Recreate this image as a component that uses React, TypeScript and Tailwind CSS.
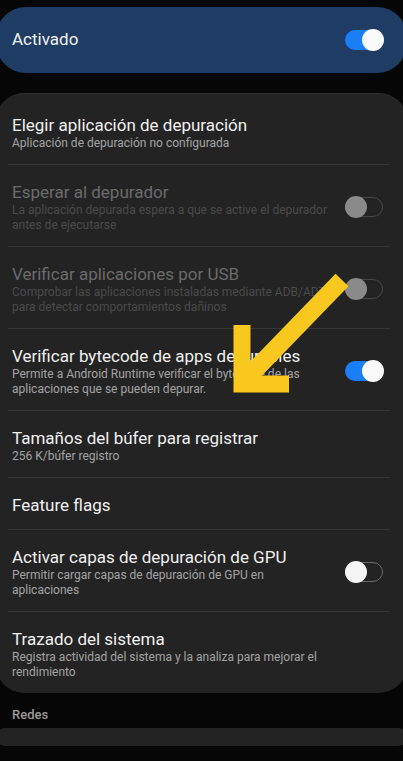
import React from "react";

type Row = {
  title: string;
  sub?: string[];
  toggle?: "on" | "off" | "disabled";
  disabled?: boolean;
};

const rows: Row[] = [
  { title: "Elegir aplicación de depuración", sub: ["Aplicación de depuración no configurada"] },
  {
    title: "Esperar al depurador",
    sub: ["La aplicación depurada espera a que se active el depurador", "antes de ejecutarse"],
    toggle: "disabled",
    disabled: true,
  },
  {
    title: "Verificar aplicaciones por USB",
    sub: ["Comprobar las aplicaciones instaladas mediante ADB/ADT", "para detectar comportamientos dañinos"],
    toggle: "disabled",
    disabled: true,
  },
  {
    title: "Verificar bytecode de apps depurables",
    sub: ["Permite a Android Runtime verificar el bytecode de las", "aplicaciones que se pueden depurar."],
    toggle: "on",
  },
  { title: "Tamaños del búfer para registrar", sub: ["256 K/búfer registro"] },
  { title: "Feature flags" },
  {
    title: "Activar capas de depuración de GPU",
    sub: ["Permitir cargar capas de depuración de GPU en", "aplicaciones"],
    toggle: "off",
  },
  {
    title: "Trazado del sistema",
    sub: ["Registra actividad del sistema y la analiza para mejorar el", "rendimiento"],
  },
];

function Toggle({ state }: { state: "on" | "off" | "disabled" }) {
  if (state === "on") {
    return (
      <div className="relative w-[38px] h-[20px] rounded-full bg-[#1a7ff6]">
        <div className="absolute right-[-1px] top-[-1px] w-[22px] h-[22px] rounded-full bg-[#fafafa]" />
      </div>
    );
  }
  const thumb = state === "off" ? "bg-[#f5f5f5]" : "bg-[#8a8a8a]";
  const border = state === "off" ? "border-[#6a6a6a]" : "border-[#474747]";
  return (
    <div className={`relative w-[38px] h-[20px] rounded-full border-[1.5px] ${border}`}>
      <div className={`absolute left-[-1.5px] top-[-2.5px] w-[22px] h-[22px] rounded-full ${thumb}`} />
    </div>
  );
}

export default function App() {
  return (
    <div
      className="w-[403px] h-[761px] overflow-hidden bg-[#060606] relative"
      style={{ fontFamily: "Roboto, 'Noto Sans', sans-serif" }}
    >
      <div className="pt-[7px]">
        <div className="h-[66px] mx-[-4px] rounded-[30px] bg-[#1f3c64] flex items-center justify-between pl-[16px] pr-[24px]">
          <span className="text-[17px] text-[#f2f2f2]">Activado</span>
          <Toggle state="on" />
        </div>
      </div>

      <div className="mt-[20px] mx-[-4px] rounded-[28px] bg-[#232323] pt-[4px] border-t border-[#2e2e2e]">
        {rows.map((r, i) => (
          <div key={i}>
            {i > 0 && <div className="h-px bg-[#353535] ml-[12px] mr-[17px]" />}
            <div className="flex items-center pl-[16px] pr-[24px] pt-[16px] pb-[13px]">
              <div className="flex-1 min-w-0">
                <div
                  className={`text-[17px] leading-[22px] ${r.disabled ? "text-[#6b6b6b]" : "text-[#f0f0f0]"}`}
                >
                  {r.title}
                </div>
                {r.sub?.map((s, j) => (
                  <div
                    key={j}
                    className={`text-[12px] leading-[15px] whitespace-nowrap ${r.disabled ? "text-[#4a4a4a]" : "text-[#a3a3a3]"}`}
                  >
                    {s}
                  </div>
                ))}
              </div>
              {r.toggle && (
                <div className="shrink-0 ml-2">
                  <Toggle state={r.toggle} />
                </div>
              )}
            </div>
          </div>
        ))}
      </div>

      <div className="px-[12px] pt-[14px] pb-[5px] text-[13px] leading-[16px] font-medium text-[#9a9a9a]">Redes</div>
      <div className="mx-[-4px] h-[18px] rounded-[12px] bg-[#232323]" />

      <svg
        className="absolute left-0 top-0 pointer-events-none"
        width="403"
        height="761"
        viewBox="0 0 403 761"
      >
        <path d="M342 280 L250 375" stroke="#f8c81e" strokeWidth="18" fill="none" />
        <path d="M242 325 L242 384 L289 384" stroke="#f8c81e" strokeWidth="17" fill="none" strokeLinejoin="miter" />
      </svg>
    </div>
  );
}
